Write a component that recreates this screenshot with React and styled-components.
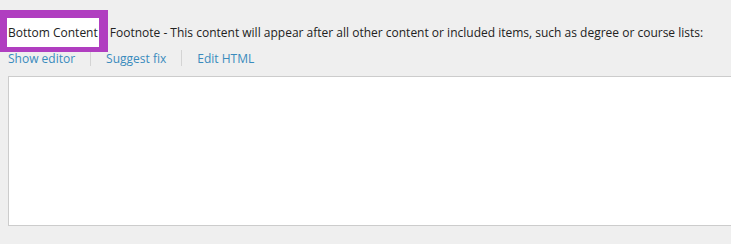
import React from 'react';
import styled, { createGlobalStyle } from 'styled-components';

const GlobalStyle = createGlobalStyle`
  html, body {
    margin: 0;
    background: #efefef;
  }
  body {
    font-family: 'Open Sans', 'Liberation Sans', sans-serif;
    font-size: 12px;
    color: #222;
  }
`;

const Field = styled.div`
  padding: 18px 0 0 7px;
  overflow: hidden;
`;

const Header = styled.div`
  display: flex;
  align-items: baseline;
  line-height: 29px;
  white-space: nowrap;
`;

// highlighted label: the purple frame is an annotation drawn over the page
const Label = styled.span`
  position: relative;
  display: inline-block;
  height: 29px;
  padding: 0 1px;
  background: #fff;
  margin-right: 11px;

  &::after {
    content: '';
    position: absolute;
    top: -8px;
    left: -7px;
    right: -9px;
    bottom: -5px;
    border-style: solid;
    border-color: #b03ec0;
    border-width: 8px 9px 5px 7px;
    pointer-events: none;
  }
`;

const Hint = styled.span`
  color: #222;
`;

const Links = styled.div`
  display: flex;
  align-items: center;
  height: 22px;
  padding-left: 1px;
`;

const ToolLink = styled.a`
  color: #3a8bbd;
  text-decoration: none;
  cursor: pointer;
`;

const Divider = styled.span`
  width: 1px;
  height: 16px;
  background: #d4d4d4;
  margin: 0 15px;
`;

const Editor = styled.div`
  margin: 7px 0 0 1px;
  width: calc(100% + 20px);
  height: 148px;
  background: #fff;
  border: 1px solid #cccccc;
`;

export default function App() {
  return (
    <>
      <GlobalStyle />
      <Field>
        <Header>
          <Label>Bottom Content</Label>
          <Hint>
            Footnote - This content will appear after all other content or included items, such as degree or course lists:
          </Hint>
        </Header>
        <Links>
          <ToolLink>Show editor</ToolLink>
          <Divider />
          <ToolLink>Suggest fix</ToolLink>
          <Divider />
          <ToolLink>Edit HTML</ToolLink>
        </Links>
        <Editor />
      </Field>
    </>
  );
}
